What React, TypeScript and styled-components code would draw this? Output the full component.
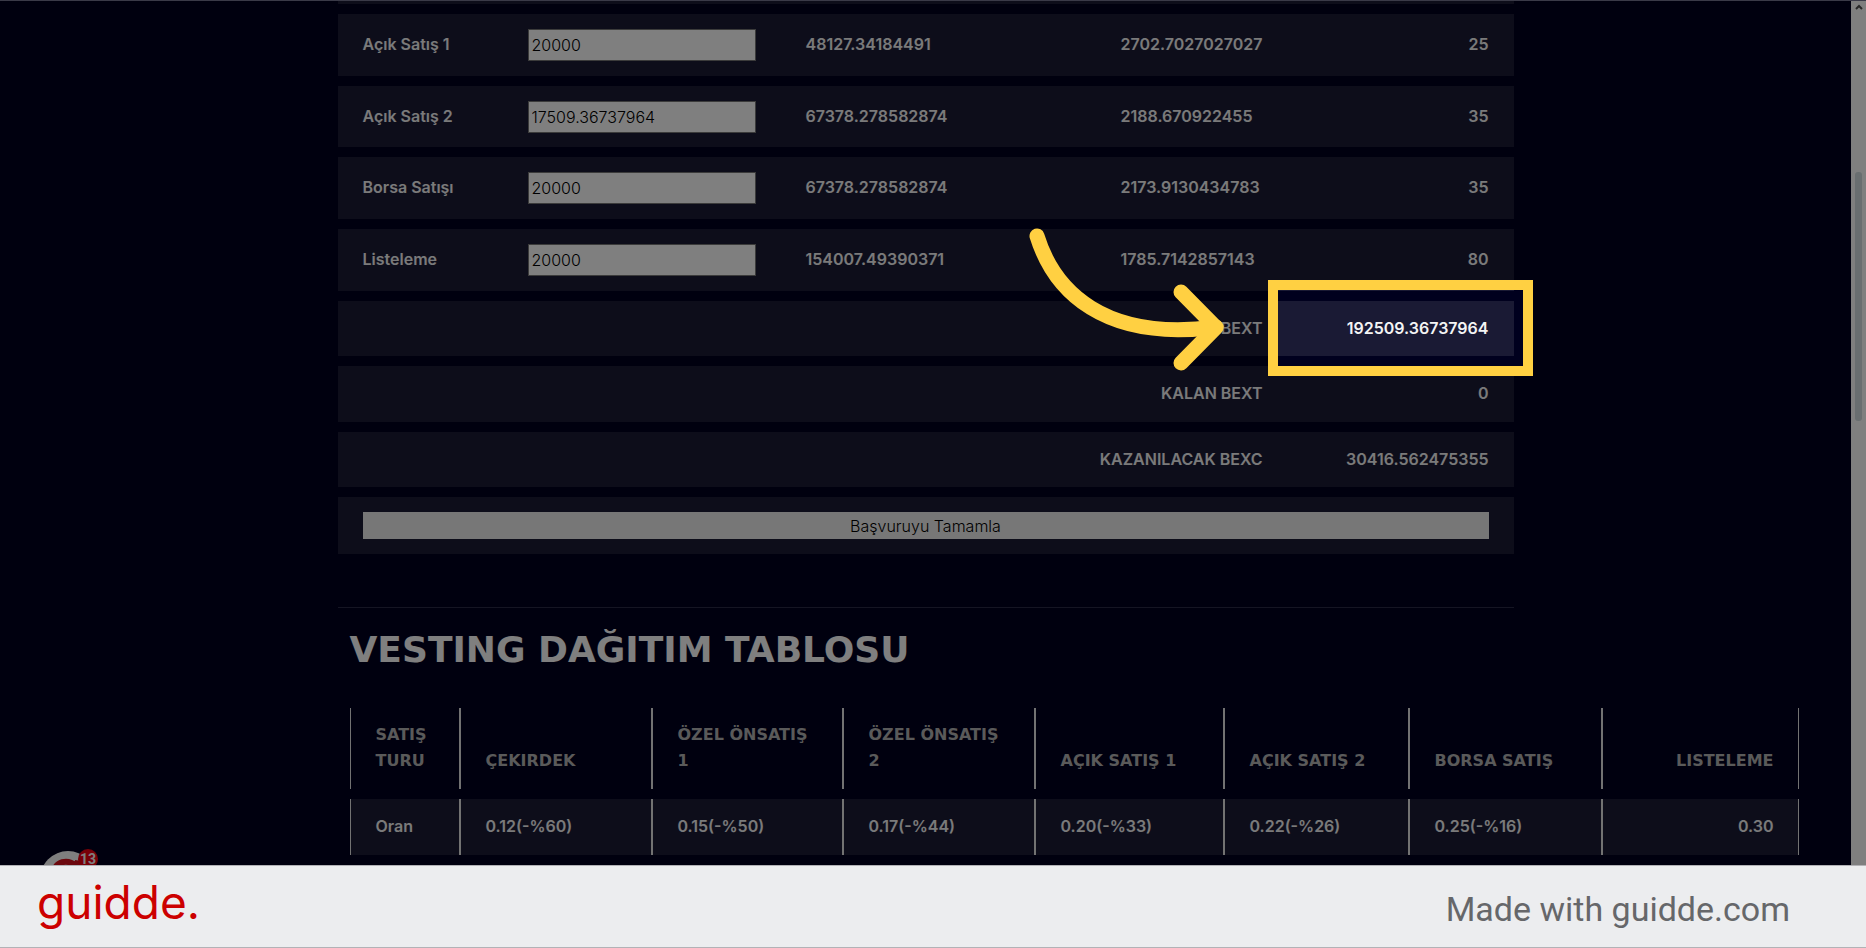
import React from "react";
import styled, { createGlobalStyle } from "styled-components";

const GlobalStyle = createGlobalStyle`
  *, *::before, *::after { box-sizing: border-box; }
  body { margin: 0; background: #00001e; font-family: Inter, "Open Sans", sans-serif; }
`;

const Screen = styled.div`
  height: 100vh;
  display: grid;
  grid-template-rows: minmax(0, 1fr) auto;
  overflow: hidden;
  background: #00001e;
`;

const Viewport = styled.div`
  position: relative;
  display: flex;
  min-height: 0;
  overflow: hidden;
  border-top: 1px solid #3a3a48;
`;

const Page = styled.main`
  flex: 1;
  min-width: 0;
  display: flex;
  flex-direction: column;
  align-items: center;
  color: #fff;
`;

const Container = styled.div`
  width: 1176px;
  max-width: 100%;
`;

const Table = styled.table`
  width: 100%;
  table-layout: fixed;
  border-collapse: separate;
  border-spacing: 0 10px;
  font-size: 16px;
  line-height: 24px;
  font-weight: 600;
`;

const SaleTable = styled(Table)`
  margin-top: -11px;
`;

const Row = styled.tr<{ $h: number }>`
  height: ${(p) => p.$h}px;
`;

const Cell = styled.td<{ $right?: boolean }>`
  position: relative;
  padding: 0 25px 2px;
  background: rgba(255, 255, 255, 0.1);
  color: #f4f4f4;
  text-align: ${(p) => (p.$right ? "right" : "left")};
`;

const FieldCell = styled(Cell)`
  padding: 0 25px;
`;

const NameCell = styled(Cell).attrs({ as: "th", scope: "row" })`
  font-weight: 600;
`;

const AmountInput = styled.input`
  display: block;
  width: 100%;
  height: 32px;
  padding: 0 3px;
  border: 1px solid #767676;
  border-radius: 0;
  background: #fff;
  color: #000;
  font: 300 16px/24px Inter, sans-serif;
`;

const Submit = styled.button`
  display: block;
  width: 100%;
  height: 27px;
  padding: 0;
  border: 0;
  background: #efefef;
  color: #000;
  font: 300 16px/24px Inter, sans-serif;
`;

const Highlight = styled.div`
  position: absolute;
  z-index: 2;
  inset: -21px -19px -20px -20px;
  border: 10px solid #ffd042;
  box-shadow: 0 0 0 4000px rgba(0, 0, 0, 0.5);
  pointer-events: none;
`;

const Arrow = styled.svg`
  position: absolute;
  z-index: 3;
  top: -81px;
  right: 282px;
  width: 204px;
  height: 160px;
  overflow: visible;
`;

const Vesting = styled.section`
  margin-top: 43px;
  border-top: 1px solid #2a2a46;
  padding: 20px 12px 0;
`;

const Title = styled.h2`
  margin: 0;
  font: 700 36px/43px "DejaVu Sans", sans-serif;
  white-space: nowrap;
`;

const VestingTable = styled(Table)`
  width: 1449px;
  margin-top: 27px;
`;

const HeadCell = styled.th<{ $right?: boolean }>`
  padding: 14px 24px 15px 25px;
  border: solid #e4e4e4;
  border-width: 0 1px;
  vertical-align: bottom;
  text-align: ${(p) => (p.$right ? "right" : "left")};
  color: #b4b4b4;
  font: 700 16px/26px "DejaVu Sans", sans-serif;
`;

const RateCell = styled(Cell)`
  padding: 0 24px 2px 25px;
  border: solid #e4e4e4;
  border-width: 0 1px;
`;

const Scrollbar = styled.div`
  flex: none;
  width: 15px;
  display: flex;
  flex-direction: column;
  align-items: center;
  background: #fff;
`;

const ScrollUp = styled.svg`
  width: 8px;
  height: 8px;
  margin-top: 2px;
`;

const Thumb = styled.div`
  width: 7px;
  height: 249px;
  margin-top: 161px;
  border-radius: 3px;
  background: #d3dde0;
`;

const ChatWidget = styled.div`
  position: absolute;
  left: 40px;
  bottom: -42px;
  width: 56px;
  height: 56px;
`;

const Badge = styled.span`
  position: absolute;
  top: -2px;
  right: -2px;
  width: 20px;
  height: 20px;
  border-radius: 50%;
  background: #f00010;
  color: #fff;
  font: 700 14px/20px Roboto, sans-serif;
  text-align: center;
`;

const Footer = styled.footer`
  position: relative;
  z-index: 4;
  height: 83px;
  display: flex;
  align-items: center;
  justify-content: space-between;
  padding: 0 76px 0 37px;
  border: solid #b2b2b6;
  border-width: 1px 0;
  background: #ecedef;
`;

const Logo = styled.a`
  color: #c00;
  text-decoration: none;
  font: 400 46px/58px Inter, sans-serif;
  padding-bottom: 10px;
`;

const Credit = styled.p`
  margin: 0;
  padding-top: 4px;
  color: #66676a;
  font: 400 34px/40px Roboto, sans-serif;
`;

type Sale = { name: string; amount: string; value: string; gain: string; share: string; height: number };

const sales: Sale[] = [
  { name: "Açık Satış 1", amount: "20000", value: "48127.34184491", gain: "2702.7027027027", share: "25", height: 62 },
  { name: "Açık Satış 2", amount: "17509.36737964", value: "67378.278582874", gain: "2188.670922455", share: "35", height: 61 },
  { name: "Borsa Satışı", amount: "20000", value: "67378.278582874", gain: "2173.9130434783", share: "35", height: 62 },
  { name: "Listeleme", amount: "20000", value: "154007.49390371", gain: "1785.7142857143", share: "80", height: 62 },
];

const rates = [
  ["SATIŞ TURU", "Oran", 110],
  ["ÇEKIRDEK", "0.12(-%60)", 192],
  ["ÖZEL ÖNSATIŞ 1", "0.15(-%50)", 191],
  ["ÖZEL ÖNSATIŞ 2", "0.17(-%44)", 192],
  ["AÇIK SATIŞ 1", "0.20(-%33)", 189],
  ["AÇIK SATIŞ 2", "0.22(-%26)", 185],
  ["BORSA SATIŞ", "0.25(-%16)", 193],
  ["LISTELEME", "0.30", 197],
] as const;

const SaleRow = ({ sale }: { sale: Sale }) => (
  <Row $h={sale.height}>
    <NameCell>{sale.name}</NameCell>
    <FieldCell>
      <AmountInput aria-label={sale.name} defaultValue={sale.amount} />
    </FieldCell>
    <Cell>{sale.value}</Cell>
    <Cell>{sale.gain}</Cell>
    <Cell $right>{sale.share}</Cell>
  </Row>
);

const GuideMark = () => (
  <>
    <Highlight />
    <Arrow viewBox="1028 221 204 160" fill="none" stroke="#ffd042" strokeWidth="15" strokeLinecap="round" strokeLinejoin="round">
      <path d="M1037 237C1054 292 1104 343 1216 328" />
      <path d="M1181 293L1216 328.500L1181 364" />
    </Arrow>
  </>
);

export default function App() {
  return (
    <>
      <GlobalStyle />
      <Screen>
        <Viewport>
          <Page>
            <Container>
              <SaleTable>
                <colgroup>
                  <col style={{ width: 165 }} />
                  <col style={{ width: 278 }} />
                  <col style={{ width: 315 }} />
                  <col style={{ width: 192 }} />
                  <col style={{ width: 226 }} />
                </colgroup>
                <tbody>
                  <Row $h={4}>
                    <Cell colSpan={5} />
                  </Row>
                  {sales.map((s) => (
                    <SaleRow key={s.name} sale={s} />
                  ))}
                  <Row $h={55}>
                    <Cell colSpan={4} $right>BEXT</Cell>
                    <Cell $right>
                      192509.36737964
                      <GuideMark />
                    </Cell>
                  </Row>
                  <Row $h={56}>
                    <Cell colSpan={4} $right>KALAN BEXT</Cell>
                    <Cell $right>0</Cell>
                  </Row>
                  <Row $h={55}>
                    <Cell colSpan={4} $right>KAZANILACAK BEXC</Cell>
                    <Cell $right>30416.562475355</Cell>
                  </Row>
                  <Row $h={57}>
                    <FieldCell colSpan={5}>
                      <Submit type="button">Başvuruyu Tamamla</Submit>
                    </FieldCell>
                  </Row>
                </tbody>
              </SaleTable>
              <Vesting>
                <Title>VESTING DAĞITIM TABLOSU</Title>
                <VestingTable>
                  <colgroup>
                    {rates.map((r) => (
                      <col key={r[0]} style={{ width: r[2] }} />
                    ))}
                  </colgroup>
                  <thead>
                    <Row $h={81}>
                      {rates.map((r, i) => (
                        <HeadCell key={r[0]} scope="col" $right={i === 7}>{r[0]}</HeadCell>
                      ))}
                    </Row>
                  </thead>
                  <tbody>
                    <Row $h={56}>
                      {rates.map((r, i) => (
                        <RateCell key={r[0]} $right={i === 7}>{r[1]}</RateCell>
                      ))}
                    </Row>
                  </tbody>
                </VestingTable>
              </Vesting>
            </Container>
          </Page>
          <Scrollbar>
            <ScrollUp viewBox="0 0 8 8" fill="none" stroke="#505050" strokeWidth="2">
              <path d="M1 6L4 3L7 6" />
            </ScrollUp>
            <Thumb />
          </Scrollbar>
          <ChatWidget>
            <svg width="56" height="56" viewBox="0 0 56 56">
              <circle cx="28" cy="28" r="28" fill="#fff" />
              <path d="M13 24C15 9 28 8 36 15L38 10V22" fill="none" stroke="#d8101c" strokeWidth="6" />
            </svg>
            <Badge>13</Badge>
          </ChatWidget>
        </Viewport>
        <Footer>
          <Logo href="#">guidde.</Logo>
          <Credit>Made with guidde.com</Credit>
        </Footer>
      </Screen>
    </>
  );
}
